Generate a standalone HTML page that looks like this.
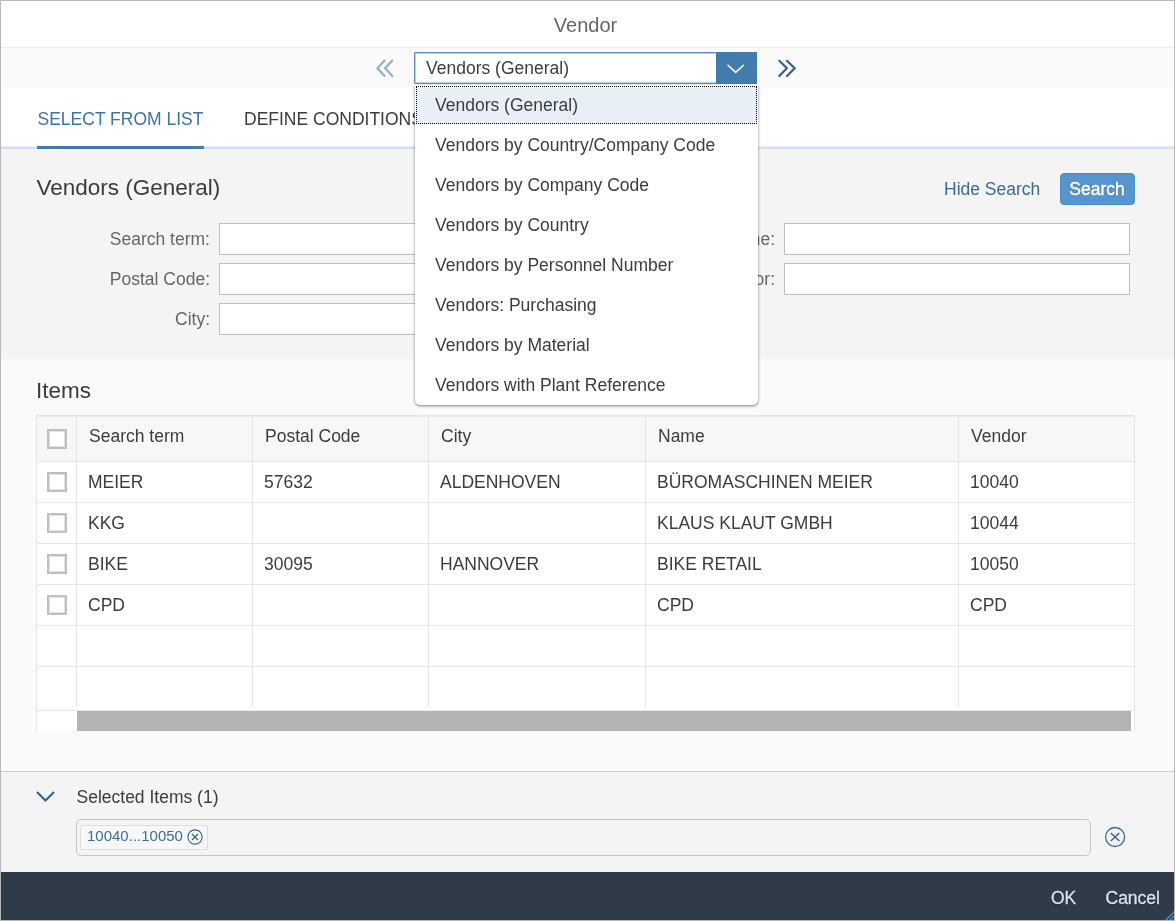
<!DOCTYPE html>
<html lang="en">
<head>
<meta charset="utf-8">
<title>Vendor</title>
<style>
*{box-sizing:border-box;margin:0;padding:0}
html,body{width:1175px;height:921px;overflow:hidden;background:#fff}
body{font-family:"Liberation Sans",Arial,sans-serif;color:#3c3c3c;font-size:17.5px;position:relative}
#dlg{will-change:transform;position:absolute;left:0;top:0;width:1175px;height:921px;border:1px solid #b8b8b8;background:#fff;overflow:hidden}
.abs{position:absolute}
#title{left:0;top:1px;width:1173px;height:47px;line-height:48px;text-align:center;padding-right:4px;font-size:20px;color:#666;border-bottom:1px solid #ededed;background:#fff}
#sub{left:0;top:47px;width:1173px;height:40px;background:#fafafa}
#sel{left:413px;top:51px;width:343px;height:32px;border:1px solid #5a8dbc;background:#fff;z-index:5;border-radius:1px;box-shadow:inset 0 0 0 1px rgba(90,141,188,.4)}
#sel .txt{position:absolute;left:11px;top:0;line-height:30px;font-size:17.5px;color:#3c3c3c}
#sel .arr{position:absolute;right:-1px;top:-1px;width:41px;height:32px;background:#427cac}
#tabs{left:0;top:87px;width:1173px;height:61px;background:#fff;border-bottom:2px solid #d1e0ee;box-shadow:inset 0 -1px 0 rgba(209,224,238,.45)}
.tab{position:absolute;top:30px;font-size:17.5px;line-height:18px;white-space:nowrap}
#t1{left:36.5px;color:#3b74a5}
#t2{left:243px;color:#3c3c3c}
#t1u{left:36px;top:145px;width:167px;height:3px;background:#427cac}
#search{left:0;top:148px;width:1173px;height:210px;background:#f4f4f4}
.h2{font-size:22.5px;color:#3c3c3c;white-space:nowrap;line-height:26px}
.lbl{position:absolute;width:200px;text-align:right;font-size:17.5px;color:#666;line-height:32px;white-space:nowrap}
.inp{position:absolute;height:32px;border:1px solid #bfbfbf;background:#fff}
#btn{left:1059px;top:172px;width:75px;height:32px;background:#5496cd;border:1px solid #4a8cc5;border-radius:4px;color:#fff;font-size:17.5px;line-height:30px;text-align:center;text-indent:-1px;-webkit-text-stroke:0.45px #fff;text-shadow:0 0 2px rgba(0,0,0,.3)}
#hide{left:943px;top:172px;font-size:17.5px;line-height:32px;color:#3a6a95;white-space:nowrap}
#items{left:0;top:358px;width:1173px;height:412px;background:#fafafa}
#tbl{left:35px;top:414px;width:1099px;height:316px;background:#fff;border-top:1px solid #e5e5e5;border-left:1px solid #e5e5e5;border-right:1px solid #e5e5e5}
.row{position:absolute;left:0;width:1097px;height:41px;border-bottom:1px solid #e5e5e5}
.hdr{background:#f7f7f7;height:46px;box-shadow:inset 0 1px 0 #ececec}
.cell{position:absolute;top:0;height:100%;border-left:1px solid #e5e5e5;padding-left:11px;font-size:17.5px;line-height:40px;color:#3c3c3c;white-space:nowrap}
.hdr .cell{line-height:40px;color:#3c3c3c;padding-left:12px}
.cb{position:absolute;left:10px;width:20px;height:20px;border:2px solid #bfbfbf;background:#fff;box-shadow:inset 0 0 0 1px rgba(191,191,191,.45)}
#hsb{left:40px;top:295px;width:1054px;height:20px;background:#b3b3b3;position:absolute}
#hsl{left:0;top:294px;width:1097px;height:1px;background:#e8e8e8;position:absolute}
#selp{left:0;top:770px;width:1173px;height:101px;background:#f4f4f4;border-top:1px solid #cdcdcd}
#tok{left:75px;top:818px;width:1015px;height:37px;border:1px solid #c6c6c6;border-radius:5px;background:#f4f4f4}
#token{left:3px;top:5px;height:25px;width:128px;border:1px solid #dedede;border-radius:2px;background:#f7f7f7;color:#3d6d99;font-size:15px;line-height:20px;padding:0 0 0 6px;white-space:nowrap}
#foot{left:0;top:871px;width:1173px;height:48px;background:#2f3c48}
#foot span{position:absolute;top:0;line-height:52px;font-size:17.5px;color:#d3e3f3;-webkit-text-stroke:0.3px #d3e3f3;text-shadow:0 1px 1px rgba(0,0,0,.55);white-space:nowrap}
#pop{left:414px;top:84px;width:343px;height:320px;background:#fff;border-radius:0 0 5px 5px;box-shadow:0 1px 3px rgba(0,0,0,.5);z-index:4}
.it{position:relative;height:40px;line-height:40px;padding-left:20px;font-size:17.5px;color:#3c3c3c;white-space:nowrap}
.it.on i{position:absolute;left:1px;right:1px;top:1px;height:38px;background:#e8eff6;border:1px dotted #000;z-index:-1}
.it span{position:relative}
</style>
</head>
<body>
<div id="dlg">
  <div id="title" class="abs" style="top:0">Vendor</div>
  <div id="sub" class="abs"></div>
  <svg class="abs" style="left:373px;top:57px" width="22" height="22" viewBox="0 0 22 22"><path d="M18.3 2.6 L11.1 10.2 L18.3 17.9 M10.6 2.6 L3.4 10.2 L10.6 17.9" fill="none" stroke="#93afcc" stroke-width="2.2" stroke-linecap="round" stroke-linejoin="round"/></svg>
  <div id="sel" class="abs"><span class="txt">Vendors (General)</span><span class="arr"><svg width="41" height="32" viewBox="0 0 41 32"><path d="M12.1 13.4 L19.7 20.3 L27.3 13.4" fill="none" stroke="#f2f6fa" stroke-width="1.6" stroke-linecap="round" stroke-linejoin="round"/></svg></span></div>
  <svg class="abs" style="left:775px;top:57px" width="22" height="22" viewBox="0 0 22 22"><path d="M3.3 2.8 L10.9 10.2 L3.3 18 M11 2.8 L18.7 10.2 L11 18" fill="none" stroke="#2f608c" stroke-width="2.2" stroke-linecap="round" stroke-linejoin="round"/></svg>

  <div id="tabs" class="abs"></div>
  <div id="t1" class="tab" style="top:109px">SELECT FROM LIST</div>
  <div id="t2" class="tab" style="top:109px">DEFINE CONDITIONS</div>
  <div id="t1u" class="abs"></div>

  <div id="search" class="abs"></div>
  <div class="abs h2" style="left:35.5px;top:174px">Vendors (General)</div>
  <div id="hide" class="abs">Hide Search</div>
  <div id="btn" class="abs">Search</div>
  <div class="lbl" style="left:9px;top:222px">Search term:</div>
  <div class="lbl" style="left:9px;top:262px">Postal Code:</div>
  <div class="lbl" style="left:9px;top:302px">City:</div>
  <div class="inp" style="left:218px;top:222px;width:346px"></div>
  <div class="inp" style="left:218px;top:262px;width:346px"></div>
  <div class="inp" style="left:218px;top:302px;width:346px"></div>
  <div class="lbl" style="left:574px;top:222px">Name:</div>
  <div class="lbl" style="left:574px;top:262px">Vendor:</div>
  <div class="inp" style="left:783px;top:222px;width:346px"></div>
  <div class="inp" style="left:783px;top:262px;width:346px"></div>

  <div id="items" class="abs"></div>
  <div class="abs h2" style="left:35px;top:377px">Items</div>
  <div id="tbl" class="abs">
    <div class="row hdr" style="top:0">
      <span class="cb" style="top:13px"></span>
      <span class="cell" style="left:39px;width:176px">Search term</span>
      <span class="cell" style="left:215px;width:176px">Postal Code</span>
      <span class="cell" style="left:391px;width:217px">City</span>
      <span class="cell" style="left:608px;width:313px">Name</span>
      <span class="cell" style="left:921px;width:176px">Vendor</span>
    </div>
    <div class="row" style="top:46px"><span class="cb" style="top:10px"></span>
      <span class="cell" style="left:39px;width:176px">MEIER</span><span class="cell" style="left:215px;width:176px">57632</span><span class="cell" style="left:391px;width:217px">ALDENHOVEN</span><span class="cell" style="left:608px;width:313px">BÜROMASCHINEN MEIER</span><span class="cell" style="left:921px;width:176px">10040</span></div>
    <div class="row" style="top:87px"><span class="cb" style="top:10px"></span>
      <span class="cell" style="left:39px;width:176px">KKG</span><span class="cell" style="left:215px;width:176px"></span><span class="cell" style="left:391px;width:217px"></span><span class="cell" style="left:608px;width:313px">KLAUS KLAUT GMBH</span><span class="cell" style="left:921px;width:176px">10044</span></div>
    <div class="row" style="top:128px"><span class="cb" style="top:10px"></span>
      <span class="cell" style="left:39px;width:176px">BIKE</span><span class="cell" style="left:215px;width:176px">30095</span><span class="cell" style="left:391px;width:217px">HANNOVER</span><span class="cell" style="left:608px;width:313px">BIKE RETAIL</span><span class="cell" style="left:921px;width:176px">10050</span></div>
    <div class="row" style="top:169px"><span class="cb" style="top:10px"></span>
      <span class="cell" style="left:39px;width:176px">CPD</span><span class="cell" style="left:215px;width:176px"></span><span class="cell" style="left:391px;width:217px"></span><span class="cell" style="left:608px;width:313px">CPD</span><span class="cell" style="left:921px;width:176px">CPD</span></div>
    <div class="row" style="top:210px">
      <span class="cell" style="left:39px;width:176px"></span><span class="cell" style="left:215px;width:176px"></span><span class="cell" style="left:391px;width:217px"></span><span class="cell" style="left:608px;width:313px"></span><span class="cell" style="left:921px;width:176px"></span></div>
    <div class="row" style="top:251px;border-bottom:none;height:40px">
      <span class="cell" style="left:39px;width:176px"></span><span class="cell" style="left:215px;width:176px"></span><span class="cell" style="left:391px;width:217px"></span><span class="cell" style="left:608px;width:313px"></span><span class="cell" style="left:921px;width:176px"></span></div>
    <div id="hsl"></div><div id="hsb"></div>
  </div>

  <div id="selp" class="abs"></div>
  <svg class="abs" style="left:34px;top:788px" width="22" height="16" viewBox="0 0 22 16"><path d="M2 3 L10.5 11.5 L19 3" fill="none" stroke="#346187" stroke-width="2"/></svg>
  <div class="abs" style="left:75.5px;top:786px;font-size:17.5px;line-height:20px;color:#3c3c3c;white-space:nowrap">Selected Items (1)</div>
  <div id="tok" class="abs"><div id="token" class="abs">10040...10050 <svg width="16" height="16" viewBox="0 0 16 16" style="position:absolute;left:106px;top:3px"><circle cx="8" cy="8" r="7.1" fill="none" stroke="#346187" stroke-width="1.1"/><path d="M5 5 L11 11 M11 5 L5 11" stroke="#346187" stroke-width="1.2" fill="none"/></svg></div></div>
  <svg class="abs" style="left:1103px;top:824.7px" width="22" height="22" viewBox="0 0 22 22"><circle cx="11.1" cy="11" r="9.5" fill="none" stroke="#3d6c96" stroke-width="1.3"/><path d="M6.8 7 L15.4 15 M15.4 7 L6.8 15" stroke="#346187" stroke-width="1.4" fill="none"/></svg>

  <div id="foot" class="abs"><span style="left:1050px">OK</span><span style="left:1104.5px">Cancel</span><svg style="position:absolute;right:0;bottom:0" width="9" height="9" viewBox="0 0 9 9"><path d="M0.5 9.5 L9.5 0.5 M4.5 9.5 L9.5 4.5 M8 9.5 L9.5 8" stroke="#4d8fcc" stroke-width="1.4" fill="none"/></svg></div>

  <div id="pop" class="abs">
    <div class="it on"><i></i>Vendors (General)</div>
    <div class="it">Vendors by Country/Company Code</div>
    <div class="it">Vendors by Company Code</div>
    <div class="it">Vendors by Country</div>
    <div class="it">Vendors by Personnel Number</div>
    <div class="it">Vendors: Purchasing</div>
    <div class="it">Vendors by Material</div>
    <div class="it">Vendors with Plant Reference</div>
  </div>
</div>
</body>
</html>
